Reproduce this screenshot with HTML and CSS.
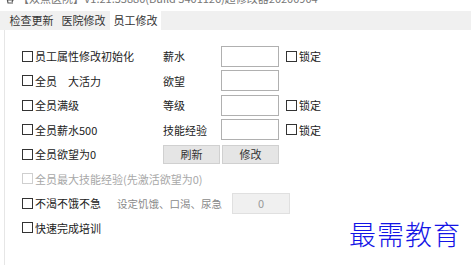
FILE: index.html
```html
<!DOCTYPE html>
<html lang="zh-CN">
<head>
    <meta charset="UTF-8">
    <title>双点医院 修改器</title>
    <link rel="stylesheet" href="styles.css">
</head>
<body>
    <div class="window">
        <div class="titlebar">
            <div class="title-clip">
                <span class="app-icon">
                    <svg width="9" height="8" viewBox="0 0 9 8"><path d="M0 1 L2 1 L3 6 L8 6 M3 3 L8 3 L7 5" fill="none" stroke="#555" stroke-width="1.2"/></svg>
                </span>
                <span class="title-text">【双点医院】V1.21.53880(Build 3401126)超修改器20200904</span>
            </div>
        </div>

        <div class="tabs">
            <div class="tab">检查更新</div>
            <div class="tab">医院修改</div>
            <div class="tab active">员工修改</div>
        </div>

        <div class="panel">
            <div class="row">
                <label class="check wide"><span class="box"></span>员工属性修改初始化</label>
                <span class="field-label">薪水</span>
                <span class="input"></span>
                <label class="check lock"><span class="box"></span>锁定</label>
            </div>
            <div class="row">
                <label class="check wide"><span class="box"></span>全员<span class="gap"></span>大活力</label>
                <span class="field-label">欲望</span>
                <span class="input"></span>
            </div>
            <div class="row">
                <label class="check wide"><span class="box"></span>全员满级</label>
                <span class="field-label">等级</span>
                <span class="input"></span>
                <label class="check lock"><span class="box"></span>锁定</label>
            </div>
            <div class="row">
                <label class="check wide"><span class="box"></span>全员薪水500</label>
                <span class="field-label">技能经验</span>
                <span class="input"></span>
                <label class="check lock"><span class="box"></span>锁定</label>
            </div>
            <div class="row">
                <label class="check wide"><span class="box"></span>全员欲望为0</label>
                <div class="buttons">
                    <button class="btn">刷新</button>
                    <button class="btn">修改</button>
                </div>
            </div>
            <div class="row">
                <label class="check disabled"><span class="box"></span>全员最大技能经验(先激活欲望为0)</label>
            </div>
            <div class="row">
                <label class="check narrow"><span class="box"></span>不渴不饿不急</label>
                <span class="hint">设定饥饿、口渴、尿急</span>
                <span class="input off">0</span>
            </div>
            <div class="row">
                <label class="check"><span class="box"></span>快速完成培训</label>
            </div>
        </div>

        <div class="watermark">最需教育</div>
    </div>
</body>
</html>
```

FILE: styles.css
```css
body {
    margin: 0;
    background-color: #fff;
    font-family: "Noto Sans CJK SC", "Noto Sans", sans-serif;
    font-size: 11px;
    color: #222;
}
.window {
    position: relative;
    width: 471px;
    height: 265px;
    overflow: hidden;
}
.titlebar {
    height: 11px;
}
/* only the lower part of the title line is on screen */
.title-clip {
    height: 5px;
    display: flex;
    align-items: flex-end;
    overflow: hidden;
    padding-left: 5px;
    color: #777;
}
.app-icon {
    display: flex;
    align-items: flex-end;
    height: 12px;
    margin-right: 4px;
}
.title-text {
    font-size: 11px;
    line-height: 13px;
    height: 13px;
    white-space: nowrap;
}
.tabs {
    display: flex;
    gap: 1px;
    height: 19px;
    padding-left: 6px;
    background-color: #f0f0f0;
}
.tab {
    width: 51px;
    line-height: 19px;
    text-align: center;
    color: #333;
}
.tab.active {
    background-color: #fff;
}
.panel {
    margin-left: 4px;
    border-left: 1px solid #e6e6e6;
    padding: 14px 0 0 17px;
    height: 240px;
}
.row {
    display: flex;
    align-items: center;
    height: 24.5px;
}
.check {
    display: flex;
    align-items: center;
    white-space: nowrap;
}
.check.wide {
    width: 141px;
}
.check.narrow {
    width: 95px;
}
.check.lock {
    margin-left: 7px;
}
.box {
    width: 9px;
    height: 9px;
    border: 1px solid #333;
    background-color: #fff;
    margin-right: 2px;
}
.gap {
    display: inline-block;
    width: 11px;
}
.check.disabled {
    color: #a8a8a8;
}
.check.disabled .box {
    border-color: #cfcfcf;
}
.field-label {
    width: 58px;
}
.input {
    box-sizing: border-box;
    width: 58px;
    height: 21px;
    border: 1px solid #b0b0b0;
    background-color: #fff;
}
.input.off {
    margin-left: 10px;
    background-color: #f0f0f0;
    border-color: #e0e0e0;
    color: #999;
    text-align: center;
    line-height: 19px;
}
.hint {
    width: 105px;
    font-size: 10.5px;
    white-space: nowrap;
    color: #8a8a8a;
}
.buttons {
    display: flex;
    gap: 2px;
}
.btn {
    box-sizing: border-box;
    width: 57px;
    height: 19px;
    padding: 0;
    border: 1px solid #d0d0d0;
    background-color: #e5e5e5;
    font-family: inherit;
    font-size: 11px;
    color: #333;
}
.watermark {
    position: absolute;
    left: 349px;
    top: 214px;
    font-size: 27px;
    letter-spacing: 1px;
    color: #1414e6;
    font-weight: 300;
}
```
